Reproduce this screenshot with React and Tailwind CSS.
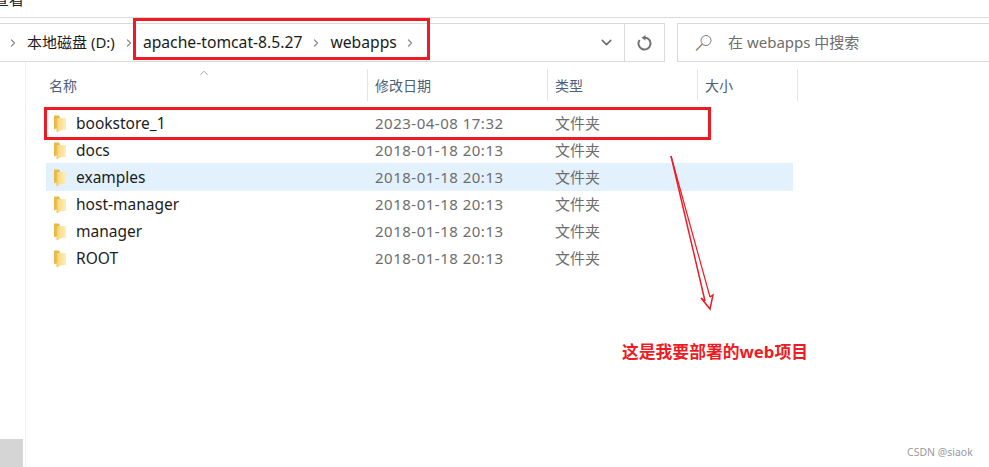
import React from 'react';
import { ChevronRight, ChevronDown, ChevronUp } from 'lucide-react';

const rows = [
  { name: 'bookstore_1', date: '2023-04-08 17:32' },
  { name: 'docs', date: '2018-01-18 20:13' },
  { name: 'examples', date: '2018-01-18 20:13', active: true },
  { name: 'host-manager', date: '2018-01-18 20:13' },
  { name: 'manager', date: '2018-01-18 20:13' },
  { name: 'ROOT', date: '2018-01-18 20:13' },
];

const Folder = () => (
  <svg width="14" height="18" viewBox="0 0 14 18" className="shrink-0">
    <defs>
      <linearGradient id="folderFill" x1="0" y1="0" x2="1" y2="0">
        <stop offset="0" stopColor="#f9d777" />
        <stop offset="1" stopColor="#fdeebc" />
      </linearGradient>
    </defs>
    <path d="M1 0.500h5l1 2v11H3l-2 1z" fill="#e9b945" />
    <path d="M4 3h9v12H8l-4 2.500z" fill="url(#folderFill)" />
    <path d="M4 3v14" stroke="#eec35a" strokeWidth="1" />
  </svg>
);

const RefreshIcon = () => (
  <svg width="16" height="16" viewBox="0 0 16 16" fill="none" className="shrink-0">
    <path d="M7.500 2.500A6 6 0 1 1 2.600 5" stroke="#737373" strokeWidth="2" />
    <path d="M8.500 0v5.500L4.500 2.700z" fill="#737373" />
  </svg>
);

const SearchIcon = () => (
  <svg width="18" height="18" viewBox="0 0 18 18" fill="none" className="shrink-0">
    <circle cx="11" cy="6.500" r="5" stroke="#7a7a7a" strokeWidth="1" />
    <path d="M7.500 10L1 16.500" stroke="#8a7a68" strokeWidth="1.200" />
  </svg>
);

const Chevron = ({ className }) => (
  <ChevronRight size={12} strokeWidth={2.6} className={`text-[#8c8c8c] shrink-0 ${className}`} />
);

const App = () => {
  return (
    <div className="relative w-[989px] h-[467px] bg-white overflow-hidden flex flex-col font-['Noto_Sans','Noto_Sans_CJK_SC',sans-serif]">
      {/* menu strip, cut off at the top */}
      <div className="h-[18px] shrink-0 border-b border-[#d9d9d9] overflow-hidden">
        <div className="-mt-[12px] -ml-[6px] text-[15px] leading-[22px] text-[#222]">查看</div>
      </div>

      {/* address bar */}
      <div className="flex mt-[5px] h-[39px] shrink-0">
        <div className="w-[625px] flex items-center border border-l-0 border-[#d9d9d9] pl-[7px]">
          <Chevron className="mr-[8px]" />
          <span className="text-[15px] text-[#1c1c1c] whitespace-nowrap">本地磁盘 (D:)</span>
          <Chevron className="mx-[8px]" />
          <span className="text-[15.700px] text-[#1c1c1c] whitespace-nowrap">apache-tomcat-8.5.27</span>
          <Chevron className="mx-[8px]" />
          <span className="text-[15.700px] text-[#1c1c1c] whitespace-nowrap">webapps</span>
          <Chevron className="ml-[7px]" />
          <ChevronDown size={17} strokeWidth={2.2} className="ml-auto mr-[9px] text-[#6d6d6d]" />
        </div>
        <div className="w-[40px] flex items-center justify-center border border-l-0 border-[#d9d9d9]">
          <RefreshIcon />
        </div>
        <div className="ml-[12px] flex-1 flex items-center border border-r-0 border-[#d9d9d9] pl-[17px]">
          <SearchIcon />
          <span className="ml-[15px] text-[15px] text-[#6d6d6d] whitespace-nowrap">在 webapps 中搜索</span>
        </div>
      </div>

      <div className="flex flex-1 min-h-0">
        {/* nav pane */}
        <div className="w-[26px] shrink-0 border-r border-[#efefef] flex flex-col justify-end">
          <div className="w-[23px] h-[28px] bg-[#d5d5d5]" />
        </div>

        {/* file list */}
        <div className="flex-1 pt-[7px]">
          <div className="flex h-[32px] text-[14px] text-[#4c607a]">
            <div className="relative w-[342px] pl-[23px] border-r border-[#e5e5e5] flex items-center">
              名称
              <ChevronUp size={14} strokeWidth={1} className="absolute left-[171px] -top-[3px] text-[#6a6a6a]" />
            </div>
            <div className="w-[180px] pl-[7px] border-r border-[#e5e5e5] flex items-center">修改日期</div>
            <div className="w-[150px] pl-[7px] border-r border-[#e5e5e5] flex items-center">类型</div>
            <div className="w-[100px] pl-[7px] border-r border-[#e5e5e5] flex items-center">大小</div>
          </div>

          <div className="mt-[9px] w-[747px] ml-[20px]">
            {rows.map((row) => (
              <div key={row.name} className={`flex items-center ${row.active ? 'h-[28px] -mt-px pt-px bg-[#e3f1fc]' : 'h-[27px]'}`}>
                <div className="w-[329px] pl-[7px] flex items-center">
                  <Folder />
                  <span className="ml-[9px] text-[15.500px] text-[#1c1c1c]">{row.name}</span>
                </div>
                <div className="w-[180px] text-[#6d6d6d] text-[15px] tracking-[0.5px] whitespace-nowrap">{row.date}</div>
                <div className="text-[#6d6d6d] text-[15px]">文件夹</div>
              </div>
            ))}
          </div>
        </div>
      </div>

      {/* red annotations drawn over the screenshot */}
      <div className="absolute left-[133px] top-[18px] w-[297px] h-[42px] border-[3px] border-[#ed1c24]" />
      <div className="absolute left-[44px] top-[107px] w-[667px] h-[33px] border-[3px] border-[#ed1c24]" />
      <svg className="absolute left-0 top-0 pointer-events-none" width="989" height="467" fill="none" stroke="#ed1c24">
        <path d="M671 156L705 301" strokeWidth="1.500" />
        <path d="M671 156L710 297" strokeWidth="1.200" />
        <path d="M705 301L701 298L710 309L713 295L710 297" strokeWidth="1.500" />
      </svg>
      <div className="absolute left-[622px] top-[340px] text-[16.800px] leading-[24px] font-bold text-[#ed1c24] whitespace-nowrap">这是我要部署的web项目</div>
      <div className="absolute left-[907px] top-[445px] text-[10.500px] leading-[14px] text-[#9a9a9a] whitespace-nowrap">CSDN @siaok</div>
    </div>
  );
};

export default App;
